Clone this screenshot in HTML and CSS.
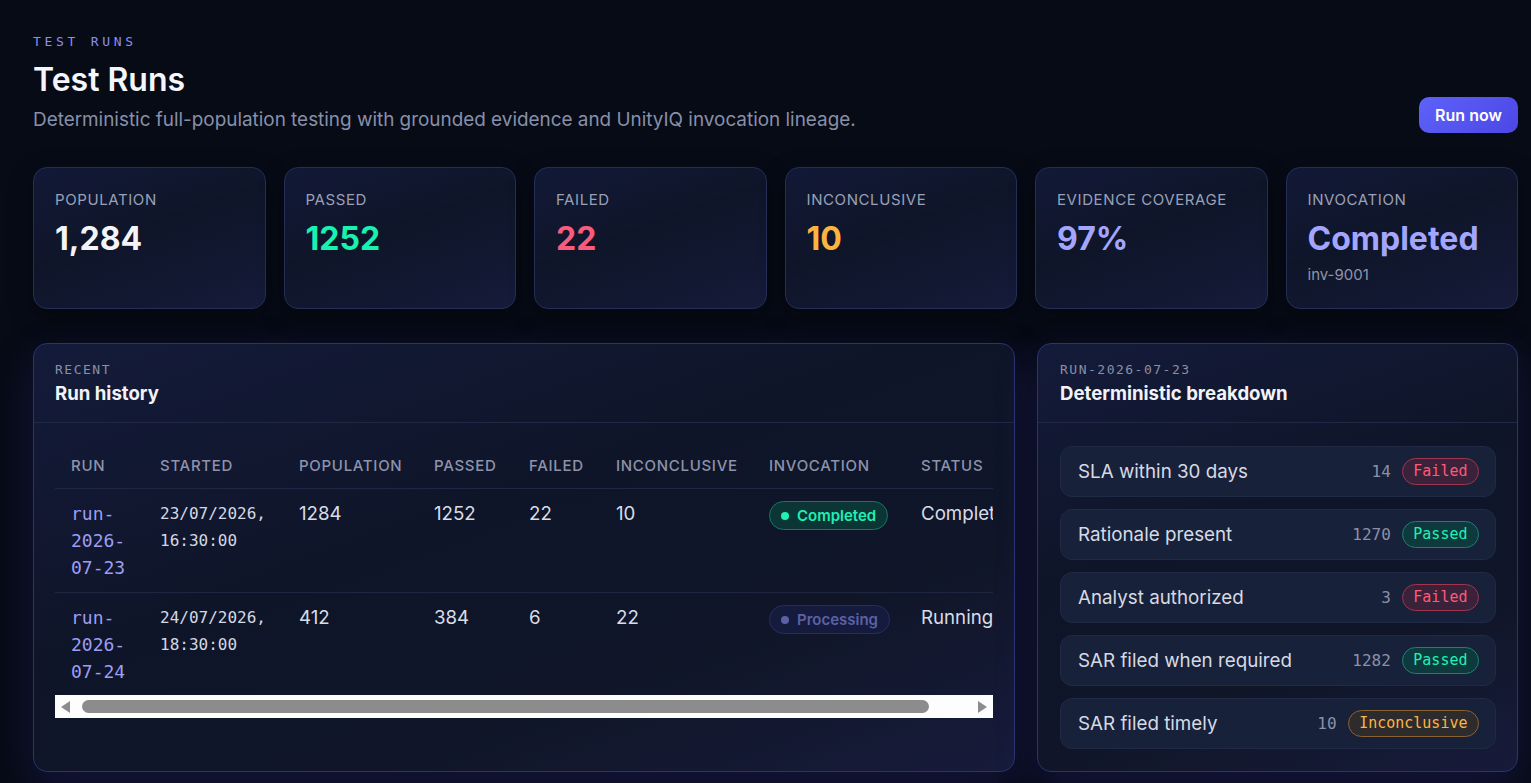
FILE: index.html
```html
<!DOCTYPE html>
<html lang="en">
<head>
<meta charset="utf-8">
<title>Test Runs</title>
<link rel="stylesheet" href="styles.css">
</head>
<body>
<main class="page">
  <header class="page-head">
    <div class="head-text">
      <div class="eyebrow">TEST RUNS</div>
      <h1 class="title">Test Runs</h1>
      <p class="subtitle">Deterministic full-population testing with grounded evidence and UnityIQ invocation lineage.</p>
    </div>
    <button class="btn-primary">Run now</button>
  </header>

  <section class="stats">
    <div class="stat"><div class="stat-label">POPULATION</div><div class="stat-value v-white">1,284</div></div>
    <div class="stat"><div class="stat-label">PASSED</div><div class="stat-value v-green">1252</div></div>
    <div class="stat"><div class="stat-label">FAILED</div><div class="stat-value v-red">22</div></div>
    <div class="stat"><div class="stat-label">INCONCLUSIVE</div><div class="stat-value v-orange">10</div></div>
    <div class="stat"><div class="stat-label">EVIDENCE COVERAGE</div><div class="stat-value v-violet">97%</div></div>
    <div class="stat"><div class="stat-label">INVOCATION</div><div class="stat-value v-violet">Completed</div><div class="stat-sub">inv-9001</div></div>
  </section>

  <section class="panels">
    <div class="panel">
      <div class="panel-head hist-head">
        <div class="panel-eyebrow">RECENT</div>
        <div class="panel-title">Run history</div>
      </div>
      <div class="panel-body hist-body">
        <div class="table-scroll">
          <table class="runs">
            <colgroup>
              <col class="c-run"><col class="c-start"><col class="c-pop"><col class="c-pass"><col class="c-fail"><col class="c-inc"><col class="c-inv"><col class="c-status">
            </colgroup>
            <thead>
              <tr><th>RUN</th><th>STARTED</th><th>POPULATION</th><th>PASSED</th><th>FAILED</th><th>INCONCLUSIVE</th><th>INVOCATION</th><th>STATUS</th></tr>
            </thead>
            <tbody>
              <tr>
                <td class="run-id">run-2026-07-23</td>
                <td class="mono-date">23/07/2026, 16:30:00</td>
                <td>1284</td><td>1252</td><td>22</td><td>10</td>
                <td><span class="pill pill-ok"><span class="dot"></span>Completed</span></td>
                <td>Completed</td>
              </tr>
              <tr>
                <td class="run-id">run-2026-07-24</td>
                <td class="mono-date">24/07/2026, 18:30:00</td>
                <td>412</td><td>384</td><td>6</td><td>22</td>
                <td><span class="pill pill-proc"><span class="dot"></span>Processing</span></td>
                <td>Running</td>
              </tr>
            </tbody>
          </table>
        </div>
        <div class="hscroll" aria-hidden="true">
          <span class="hs-btn"><span class="arrow-left"></span></span>
          <span class="hs-track"><span class="hs-thumb"></span></span>
          <span class="hs-btn"><span class="arrow-right"></span></span>
        </div>
      </div>
    </div>

    <div class="panel">
      <div class="panel-head">
        <div class="panel-eyebrow">RUN-2026-07-23</div>
        <div class="panel-title">Deterministic breakdown</div>
      </div>
      <div class="panel-body list">
        <div class="item"><span class="item-label">SLA within 30 days</span><span class="item-count">14</span><span class="badge b-fail">Failed</span></div>
        <div class="item"><span class="item-label">Rationale present</span><span class="item-count">1270</span><span class="badge b-pass">Passed</span></div>
        <div class="item"><span class="item-label">Analyst authorized</span><span class="item-count">3</span><span class="badge b-fail">Failed</span></div>
        <div class="item"><span class="item-label">SAR filed when required</span><span class="item-count">1282</span><span class="badge b-pass">Passed</span></div>
        <div class="item"><span class="item-label">SAR filed timely</span><span class="item-count">10</span><span class="badge b-inc">Inconclusive</span></div>
      </div>
    </div>
  </section>
</main>
</body>
</html>
```

FILE: styles.css
```css
* { box-sizing: border-box; }
html, body { margin: 0; padding: 0; }
body {
  background: #070b16;
  font-family: Inter, "Noto Sans", sans-serif;
  color: #e6e9f2;
  overflow: hidden;
  height: 783px;
}
.page {
  padding: 34px 13px 0 33px;
}
.page-head {
  display: flex;
  justify-content: space-between;
  align-items: flex-end;
}
.eyebrow {
  font-family: "DejaVu Sans Mono", monospace;
  font-size: 13px;
  line-height: 16px;
  letter-spacing: 3.7px;
  color: #8b8df5;
}
.title {
  margin: 12px 0 0;
  font-size: 32px;
  line-height: 36px;
  font-weight: 600;
  color: #f5f6fb;
}
.subtitle {
  margin: 10px 0 0;
  font-size: 18.9px;
  line-height: 24px;
  color: #8790aa;
}
.btn-primary {
  width: 99px;
  height: 36px;
  border: 0;
  border-radius: 10px;
  background: linear-gradient(135deg, #5d62f8, #4c47e6);
  color: #fff;
  font-family: Inter, sans-serif;
  font-size: 16px;
  font-weight: 600;
  margin-bottom: -1px;
}

.stats {
  margin-top: 35px;
  display: grid;
  grid-template-columns: repeat(6, 1fr);
  gap: 18px;
}
.stat {
  height: 142px;
  border: 1px solid #252e57;
  border-radius: 14px;
  padding: 23px 21px;
  background: linear-gradient(160deg, #121937 0%, #0f1529 45%, #121831 75%, #161b3a 100%);
  box-shadow: 0 8px 24px rgba(0, 0, 0, 0.35);
}
.stat-label {
  font-size: 15px;
  line-height: 18px;
  letter-spacing: 0.6px;
  color: #9aa1b6;
}
.stat-value {
  margin-top: 12px;
  font-size: 32px;
  line-height: 36px;
  font-weight: 700;
}
.stat-sub {
  margin-top: 9px;
  font-size: 15px;
  line-height: 18px;
  color: #8e95aa;
}
.v-white { color: #f3f4f8; }
.v-green { color: #17f2b0; }
.v-red { color: #fb5b7b; }
.v-orange { color: #fbb441; }
.v-violet { color: #a3a5ff; }

.panels {
  margin-top: 34px;
  display: grid;
  grid-template-columns: 982px 481px;
  gap: 22px;
  height: 429px;
}
.panel {
  border: 1px solid #2a346e;
  border-radius: 14px;
  background: linear-gradient(160deg, #141b3a 0%, #0f1529 40%, #101628 70%, #171b3b 100%);
  box-shadow: 0 16px 40px rgba(55, 45, 150, 0.28);
  overflow: hidden;
  display: flex;
  flex-direction: column;
}
.panel-head {
  padding: 18px 22px 17px;
  border-bottom: 1px solid #1f2844;
}
.hist-head { padding-left: 21px; }
.panel-eyebrow {
  font-family: "DejaVu Sans Mono", monospace;
  font-size: 13px;
  line-height: 16px;
  letter-spacing: 1.5px;
  color: #8990a6;
}
.panel-title {
  margin-top: 3px;
  font-size: 18.6px;
  line-height: 24px;
  font-weight: 700;
  color: #f1f3f8;
}
.panel-body {
  padding: 20px 22px 20px;
}
.hist-body { padding: 20px 21px; }

.table-scroll {
  overflow: hidden;
}
.runs {
  border-collapse: collapse;
  table-layout: fixed;
  width: 978px;
}
.c-run { width: 89px; }
.c-start { width: 139px; }
.c-pop { width: 135px; }
.c-pass { width: 95px; }
.c-fail { width: 87px; }
.c-inc { width: 153px; }
.c-inv { width: 152px; }
.c-status { width: 128px; }
.runs th {
  text-align: left;
  font-size: 15px;
  line-height: 17px;
  font-weight: 500;
  letter-spacing: 0.7px;
  color: #8c93ab;
  padding: 14px 16px 14px;
  border-bottom: 1px solid #1e2845;
  white-space: nowrap;
}
.runs td {
  vertical-align: top;
  padding: 11px 16px;
  font-size: 18.7px;
  line-height: 27px;
  color: #d9dde7;
  white-space: nowrap;
  overflow: hidden;
}
.runs tbody tr + tr td { border-top: 1px solid #1e2641; }
.runs td.run-id {
  white-space: normal;
  font-family: "DejaVu Sans Mono", monospace;
  font-size: 18px;
  color: #9d9ef4;
}
.runs td.mono-date {
  white-space: normal;
  font-family: "DejaVu Sans Mono", monospace;
  font-size: 16px;
  color: #d4d8e2;
}
.pill {
  display: inline-flex;
  align-items: center;
  gap: 8px;
  height: 29px;
  padding: 0 11px;
  border-radius: 15px;
  font-size: 15px;
  font-weight: 600;
  line-height: 1;
  vertical-align: top;
  margin-top: 1px;
}
.pill .dot { width: 8px; height: 8px; border-radius: 50%; background: currentColor; }
.pill-ok { color: #1ff0b3; background: #0c3535; border: 1px solid #127a63; }
.pill-proc { color: #5c61a5; background: #151b3d; border: 1px solid #262d63; }

.hscroll {
  display: flex;
  height: 23px;
  margin-top: -1px;
  background: #fdfdfd;
}
.hs-btn {
  width: 22px;
  flex: none;
  display: flex;
  align-items: center;
  justify-content: center;
}
.arrow-left {
  width: 0; height: 0;
  border-top: 6px solid transparent;
  border-bottom: 6px solid transparent;
  border-right: 9px solid #8c8c8c;
  margin-left: -2px;
}
.arrow-right {
  width: 0; height: 0;
  border-top: 6px solid transparent;
  border-bottom: 6px solid transparent;
  border-left: 9px solid #8c8c8c;
  margin-left: 1px;
}
.hs-track {
  flex: 1;
  display: flex;
  align-items: center;
  padding-left: 5px;
}
.hs-thumb {
  width: 847px;
  height: 13px;
  border-radius: 7px;
  background: #8c8c8c;
}

.list {
  display: flex;
  flex-direction: column;
  gap: 12px;
  padding: 23px 21px 22px 22px;
}
.item {
  height: 51px;
  display: flex;
  align-items: center;
  padding: 0 16px 0 17px;
  border-radius: 12px;
  background: #18213a;
  border: 1px solid #212a44;
}
.item-label {
  flex: 1;
  font-size: 18.8px;
  color: #d6dae4;
}
.item-count {
  font-family: "DejaVu Sans Mono", monospace;
  font-size: 16px;
  color: #8a91a8;
  margin-right: 11px;
}
.badge {
  font-family: "DejaVu Sans Mono", monospace;
  font-size: 15px;
  line-height: 25px;
  padding: 0 10.5px;
  border-radius: 14px;
}
.b-fail { color: #ff5a78; background: #39223a; border: 1px solid #a03650; }
.b-pass { color: #1ff1b6; background: #0f3a3d; border: 1px solid #148670; }
.b-inc { color: #fbb545; background: #2e2b2d; border: 1px solid #8a6232; }
```
